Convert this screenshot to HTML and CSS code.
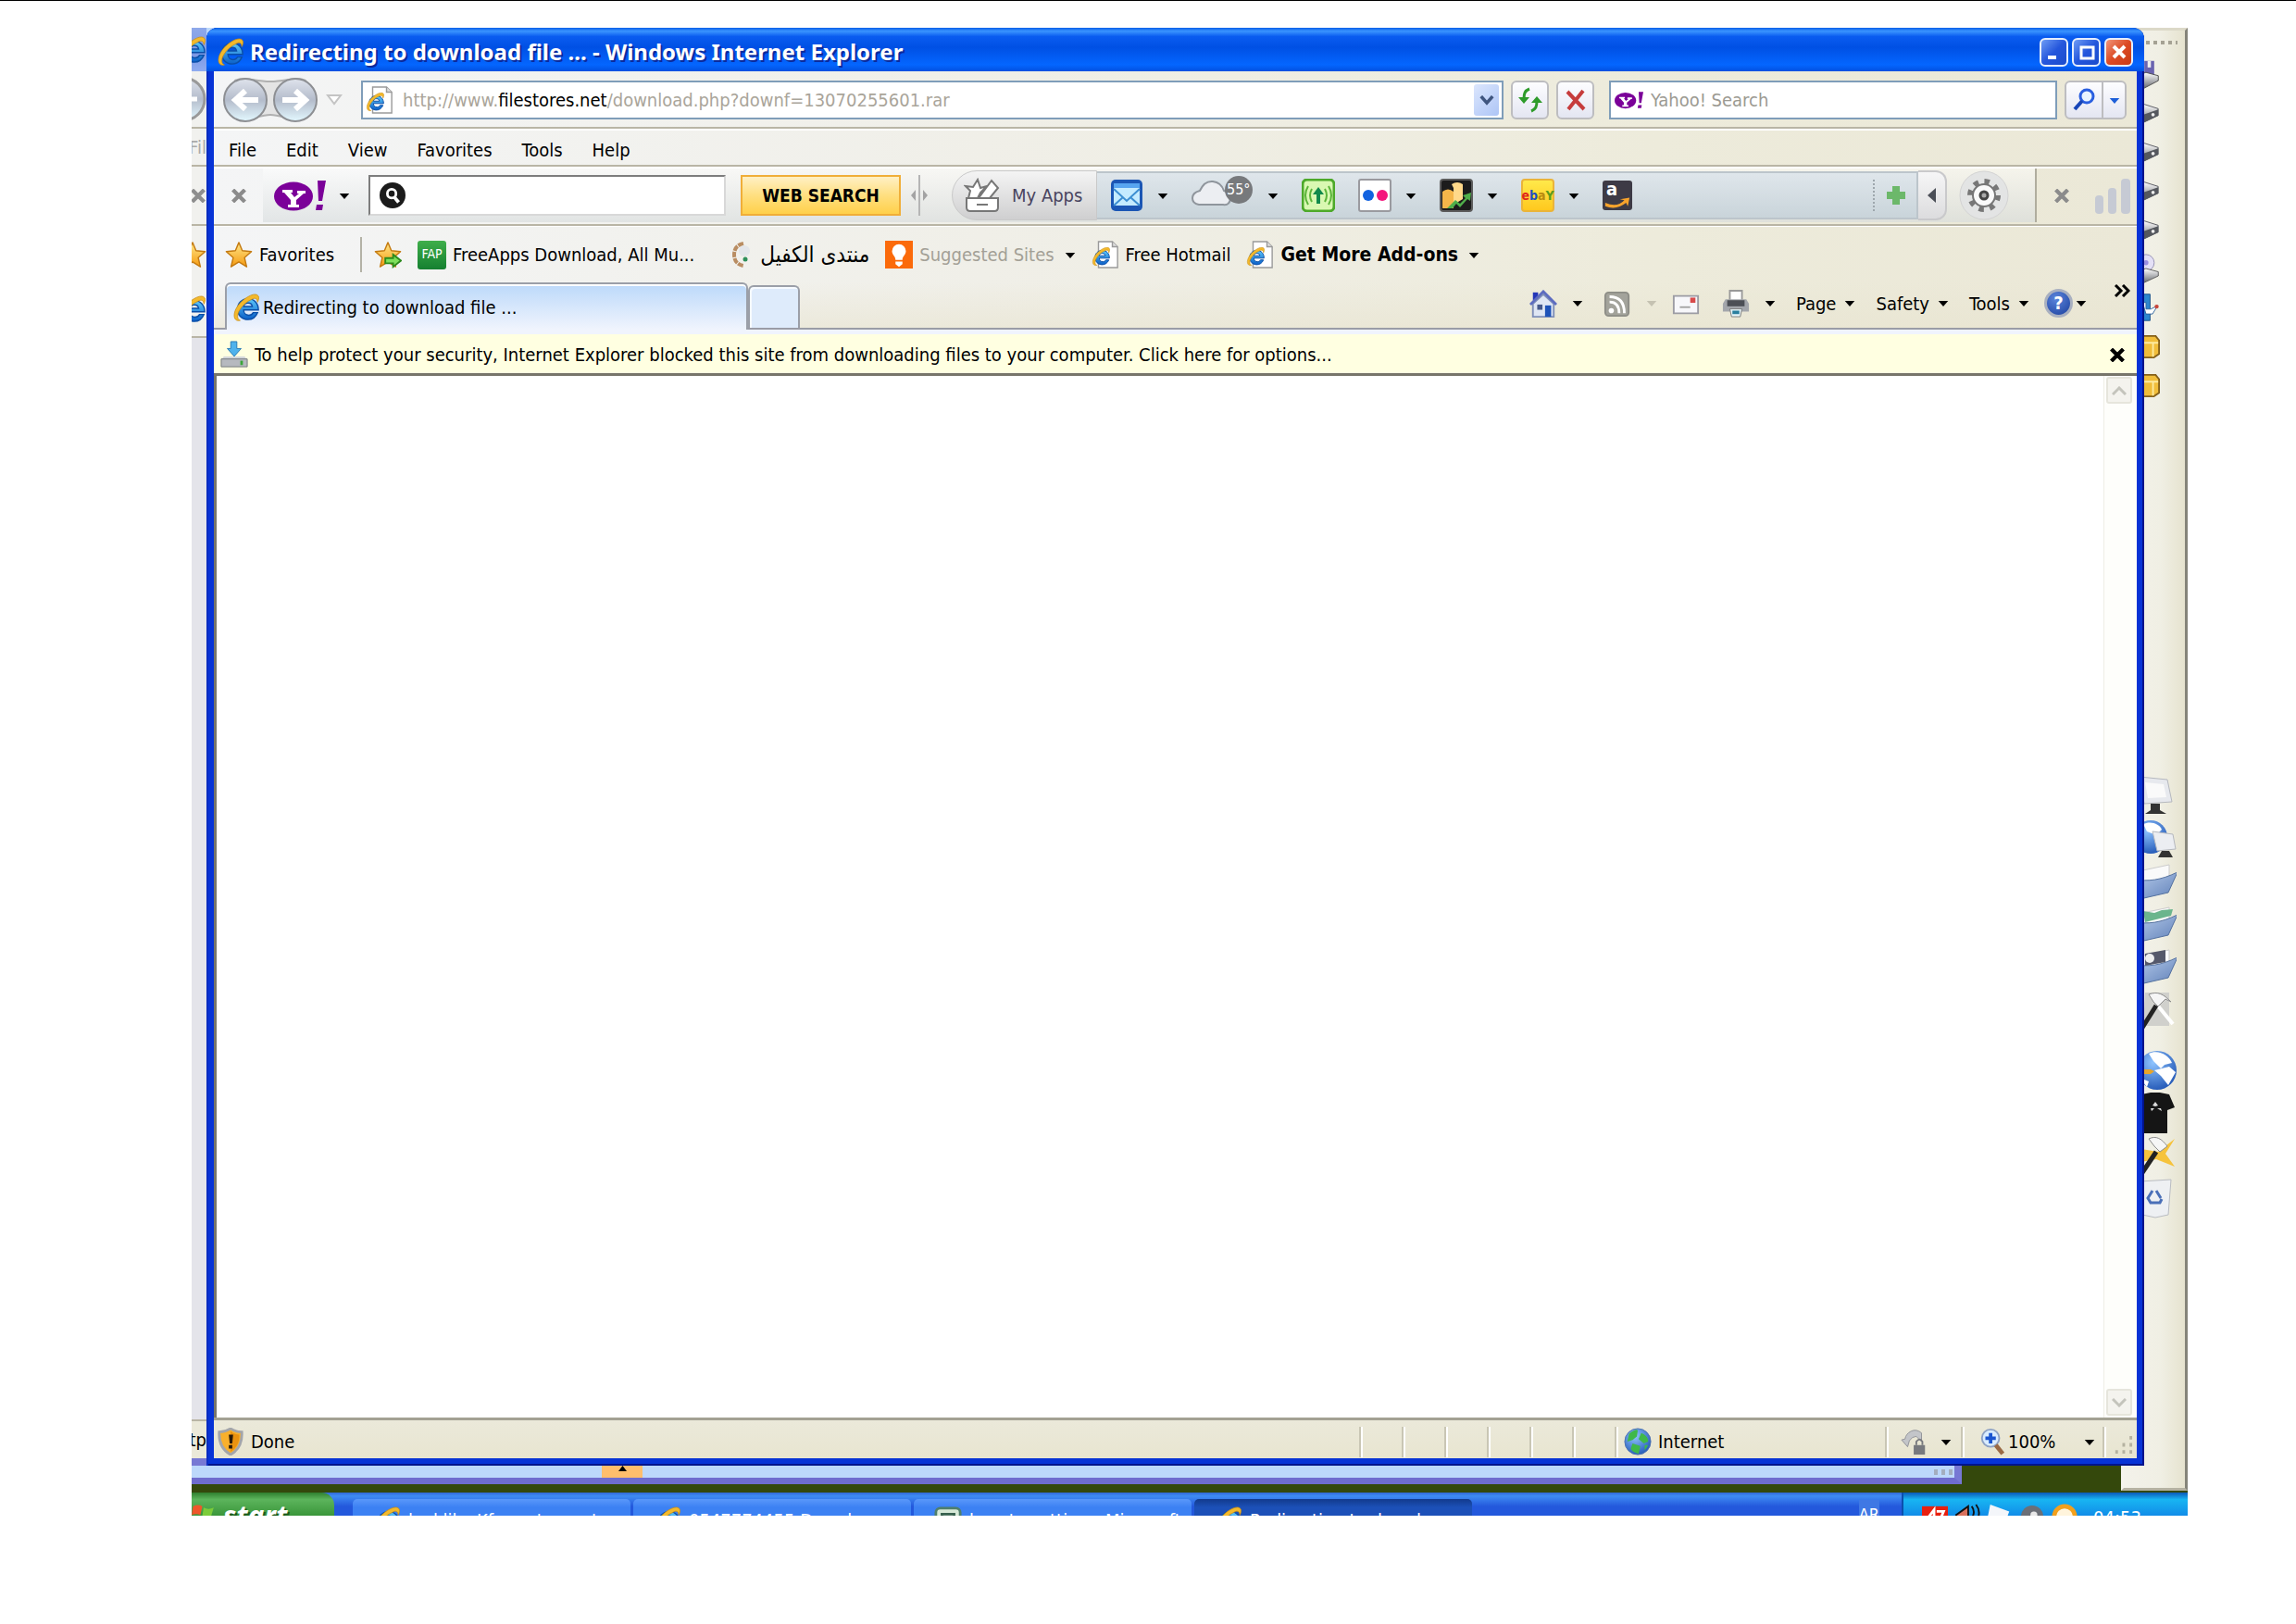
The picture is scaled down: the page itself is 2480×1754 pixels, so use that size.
FILE: index.html
```
<!DOCTYPE html>
<html lang="en">
	<head>
		<meta charset="utf-8">
		<title>Redirecting to download file ...</title>
		<link rel="stylesheet" href="styles.css">
	</head>
	<body>
		<!-- shared icons -->
		<svg class="defs" aria-hidden="true">
			<defs>
				<linearGradient id="gBlue" x1="0" y1="0" x2="0" y2="1"><stop offset="0" stop-color="#5cc8fa"/><stop offset="1" stop-color="#0a5fc8"/></linearGradient>
				<linearGradient id="gGold" x1="0" y1="0" x2="0" y2="1"><stop offset="0" stop-color="#ffe88a"/><stop offset="1" stop-color="#f59a10"/></linearGradient>
				<linearGradient id="gNav" x1="0" y1="0" x2="0" y2="1"><stop offset="0" stop-color="#dfe3ec"/><stop offset=".5" stop-color="#b4bccb"/><stop offset="1" stop-color="#e3f8ff"/></linearGradient>
				<linearGradient id="gGray" x1="0" y1="0" x2="0" y2="1"><stop offset="0" stop-color="#fff"/><stop offset="1" stop-color="#6b6e74"/></linearGradient>
				<linearGradient id="gFolder" x1="0" y1="0" x2="1" y2="1"><stop offset="0" stop-color="#b9cdec"/><stop offset="1" stop-color="#5f80b8"/></linearGradient>
				<radialGradient id="gGlobe" cx=".4" cy=".3" r=".8"><stop offset="0" stop-color="#8fc4ff"/><stop offset="1" stop-color="#1a4fb0"/></radialGradient>
			</defs>
			<symbol id="ie" viewBox="0 0 32 32">
				<path d="M30 19H13c0 4 3 6 6 6 2 0 4-1 5-3h5c-2 5-6 8-11 8C11 30 6 25 6 18S11 6 18 6s12 5 12 13zM13 15h10c-.5-3-2-4-5-4s-4.500 1-5 4z" fill="url(#gBlue)" stroke="#0b4fa8" stroke-width="1.500" fill-rule="evenodd"/>
				<path d="M9 31C0 33 0 21 8 12S27-2 30 3c1 2 0 5-1 7 0-4-3-6-7-3C14 10 6 20 6 26c0 3 1 4 3 5z" fill="#f3b92c" stroke="#c98d14" stroke-width=".8"/>
			</symbol>
			<symbol id="iepage" viewBox="0 0 32 32">
				<path d="M8 1h16l6 6v24H8z" fill="#fff" stroke="#9a9a9a" stroke-width="1.500"/>
				<path d="M24 1v6h6" fill="#ddd" stroke="#9a9a9a" stroke-width="1.500"/>
				<svg x="0" y="7" width="22" height="22" viewBox="0 0 32 32"><use href="#ie"/></svg>
			</symbol>
			<symbol id="star" viewBox="0 0 32 32">
				<path d="M16 2l4 9.500 10.500 1-8 7L25 30l-9-5.500L7 30l2.500-10.500-8-7 10.500-1z" fill="url(#gGold)" stroke="#c47a10" stroke-width="1.500" stroke-linejoin="round"/>
			</symbol>
			<symbol id="caret" viewBox="0 0 12 8"><path d="M0 1h12L6 8z"/></symbol>
			<symbol id="x" viewBox="0 0 16 14"><path d="M2 1l12 12M14 1L2 13" fill="none" stroke="currentColor" stroke-width="4"/></symbol>
			<symbol id="yahoo" viewBox="0 0 56 34">
				<ellipse cx="21" cy="18" rx="21" ry="15.500" fill="#7b0099"/>
				<path d="M9 11h11v3h-2l4 5 5-4h-2v-3h9v3h-2l-8 7v5h3v3H15v-3h3v-5l-7-8H9z" fill="#fff"/>
				<path d="M47 1h9l-4 22h-4zM46 27h7l-1 6h-7z" fill="#7b0099"/>
			</symbol>
			<symbol id="drive" viewBox="0 0 42 30">
				<path d="M2 14l22-9 16 5v8l-17 8L2 22z" fill="url(#gGray)" stroke="#55585e"/>
				<path d="M23 17l17-6v7l-17 8z" fill="#55585e"/><circle cx="34" cy="17" r="2" fill="#eee"/>
			</symbol>
			<symbol id="folder" viewBox="0 0 48 44">
				<path d="M2 12l38-8v24H4z" fill="#fafafa" stroke="#ccc"/>
				<path d="M2 20c16 2 28 1 47-8l-10 22L4 42z" fill="url(#gFolder)" stroke="#54719f"/>
			</symbol>
			<symbol id="globe" viewBox="0 0 32 32">
				<circle cx="16" cy="16" r="15" fill="url(#gGlobe)" stroke="#4a6fae"/>
			</symbol>
			<symbol id="hammer" viewBox="0 0 48 44">
				<path d="M14 4h26v36H12z" fill="#d0d0cc"/>
				<path d="M26 16l18 22" stroke="#fff" stroke-width="4"/><path d="M26 18l-15 24" stroke="#222" stroke-width="5"/>
				<path d="M18 6c10-4 16 0 24 8l-6-3-8 8-5-5z" fill="#f6f6f6" stroke="#8d8d8d"/>
			</symbol>
		</svg>

		<div class="desktop">
			<div class="workspace">
				<aside class="dock">
					<div class="grip"></div>
					<ul class="drives">
						<li><svg viewBox="0 0 42 36"><path d="M24 2h12v18H24z" fill="#6a63b0"/><path d="M28 2h4v8h-4z" fill="#eee"/><path d="M2 24l24-8 15 4v6l-17 9L2 32z" fill="url(#gGray)" stroke="#444"/></svg></li>
						<li><svg><use href="#drive"/></svg></li>
						<li><svg><use href="#drive"/></svg></li>
						<li><svg><use href="#drive"/></svg></li>
						<li><svg><use href="#drive"/></svg></li>
						<li><svg viewBox="0 0 42 36"><circle cx="26" cy="11" r="10" fill="#e4e0f6" stroke="#8f8bb0"/><circle cx="26" cy="11" r="3" fill="#9a8ee0"/><path d="M2 26l24-8 15 4v5l-17 8L2 32z" fill="url(#gGray)" stroke="#555"/></svg></li>
						<li><svg viewBox="0 0 42 36"><path d="M14 2h17v32H14z" fill="#2d86cf" stroke="#124a86"/><path d="M22 12h4v8h6l8-4-6 10h-8z" fill="#fff" stroke="#2a5f9a"/><circle cx="39" cy="17" r="2.500" fill="#c8443a"/></svg></li>
						<li><svg viewBox="0 0 42 30"><path d="M3 6l20-3h14l4 5v16l-6 4H3z" fill="#f0bd3a" stroke="#84601a" stroke-width="2"/><path d="M8 11h32M34 11v16" stroke="#fdeaa0" stroke-width="2"/></svg></li>
						<li><svg viewBox="0 0 42 30"><path d="M3 6l20-3h14l4 5v16l-6 4H3z" fill="#f0bd3a" stroke="#84601a" stroke-width="2"/><path d="M8 11h32M34 11v16" stroke="#fdeaa0" stroke-width="2"/></svg></li>
					</ul>
					<ul class="places">
						<li><svg viewBox="0 0 48 44"><path d="M8 1l30 3 5 24-30 2z" fill="#e7e9ee" stroke="#b5b8be"/><path d="M14 7l20 2 3 14-20 1z" fill="#fafafa"/><path d="M20 30h10v7l7 4H14l6-4z" fill="#333"/></svg></li>
						<li><svg viewBox="0 0 48 44"><circle cx="20" cy="20" r="18" fill="url(#gGlobe)"/><path d="M12 6c8-4 18 0 20 6l-6 6-10-4z" fill="#fff"/><path d="M22 14l22 3 3 16-20 2z" fill="#eceef2" stroke="#b5b8be"/><path d="M32 35h8l4 7H28z" fill="#333"/></svg></li>
						<li><svg><use href="#folder"/></svg></li>
						<li><svg viewBox="0 0 48 44"><use href="#folder"/><path d="M12 8l12 2 8-3 12-1-2 7-28 7z" fill="#6bb58d"/></svg></li>
						<li><svg viewBox="0 0 48 44"><use href="#folder"/><path d="M14 8l22-4v13l-22 4z" fill="#55586a"/><circle cx="19" cy="13" r="5" fill="#eee"/></svg></li>
						<li><svg><use href="#hammer"/></svg></li>
					</ul>
					<ul class="places more">
						<li><svg viewBox="0 0 48 44"><circle cx="27" cy="22" r="21" fill="url(#gGlobe)"/><path d="M18 4c10-5 22 2 25 10l-8 2-4 4-8-8zM24 22l16-4 7 6-8 14-8-10zM8 30l10 4-2 6z" fill="#fff"/><path d="M8 21h12l4 2-4 3H8z" fill="#e8a52a"/></svg></li>
						<li><svg viewBox="0 0 48 44"><path d="M10 2l10-2h10l10 2 6 14-8 3v25H12V19l-8-3z" fill="#151515"/><path d="M25 10l3 4-3 1-3-1zM20 17h4l-3 3zM27 17h4l1 3z" fill="#ddd"/></svg></li>
						<li><svg viewBox="0 0 48 44"><path d="M4 14l24 4 18-14-10 16 10 14-20-8-22 4z" fill="#f6c33c"/><path d="M26 18L10 42" stroke="#222" stroke-width="5"/><path d="M18 4c8-4 14 0 20 8l-8 6-6-6z" fill="#f6f6f6" stroke="#8d8d8d"/></svg></li>
						<li><svg viewBox="0 0 48 44"><path d="M8 4l34-2-3 38-14 3-14-3z" fill="#eef0f3" stroke="#b9bcc2"/><path d="M26 14l5 8M22 14l-5 8 3 5h10l2-4" fill="none" stroke="#4a6fb8" stroke-width="3"/></svg></li>
					</ul>
				</aside>

				<div class="back-window">
					<div class="edge">
						<div class="edge-title"><svg class="ico"><use href="#ie"/></svg></div>
						<div class="edge-nav"><svg class="ico-lg" viewBox="0 0 50 50"><circle cx="25" cy="25" r="23" fill="url(#gNav)" stroke="#999" stroke-width="3"/><path d="M40 25H22m9-9l-9 9 9 9" fill="none" stroke="#fff" stroke-width="5"/></svg></div>
						<div class="edge-menu">Fil</div>
						<div class="edge-tools"><svg class="close-x"><use href="#x"/></svg></div>
						<div class="edge-favs"><svg class="ico"><use href="#star"/></svg></div>
						<div class="edge-tabs"><svg class="ico"><use href="#ie"/></svg></div>
						<div class="edge-page"></div>
						<div class="edge-status">http</div>
						<div class="edge-bottom"></div>
					</div>
					<div class="back-foot"><button class="foot-up" aria-label="Expand"><svg viewBox="0 0 12 8"><path d="M6 0l6 8H0z"/></svg></button><span class="foot-grip"></span></div>
				</div>

				<main class="window">
					<header class="titlebar">
						<svg class="ico"><use href="#ie"/></svg>
						<h1>Redirecting to download file ... - Windows Internet Explorer</h1>
						<button class="win-btn" aria-label="Minimize"><svg viewBox="0 0 20 20"><path d="M3 14h9v4H3z" fill="#fff"/></svg></button>
						<button class="win-btn" aria-label="Maximize"><svg viewBox="0 0 20 20"><path d="M4 5h13v12H4z" fill="none" stroke="#fff" stroke-width="3"/></svg></button>
						<button class="win-btn red" aria-label="Close"><svg viewBox="0 0 20 20"><path d="M4 4l12 12M16 4L4 16" stroke="#fff" stroke-width="4"/></svg></button>
					</header>
					<div class="frame">
						<div class="chrome">
							<div class="nav-row">
								<button class="travel" aria-label="Back and forward">
									<svg viewBox="0 0 104 52">
										<path d="M14 5c10-5 20 1 38 1s28-6 38-1l10 20-10 20c-14 6-24-3-38-3s-24 9-38 3L4 25z" fill="#e4e4e4" stroke="#b0b0b0" stroke-width="2"/>
										<circle cx="25" cy="26" r="23" fill="url(#gNav)" stroke="#8d8f93" stroke-width="2"/>
										<circle cx="79" cy="26" r="23" fill="url(#gNav)" stroke="#8d8f93" stroke-width="2"/>
										<path d="M39 26H14m11-10L14 26l11 10" fill="none" stroke="#fff" stroke-width="6"/>
										<path d="M65 26h25M79 16l11 10-11 10" fill="none" stroke="#fff" stroke-width="6"/>
									</svg>
								</button>
								<button class="recent" aria-label="Recent pages"><svg viewBox="0 0 18 12"><path d="M2 1h14l-7 9z" fill="#fff" stroke="#c4c4c4" stroke-width="2"/></svg></button>
								<div class="address">
									<svg class="ico"><use href="#iepage"/></svg>
									<div class="url" contenteditable="true" role="textbox" aria-label="Address">http://www.<b>filestores.net</b>/download.php?downf=13070255601.rar</div>
									<button class="drop" aria-label="Show addresses"><svg viewBox="0 0 18 12"><path d="M2 1l7 8 7-8" fill="none" stroke="#3f557f" stroke-width="4"/></svg></button>
								</div>
								<button class="sq-btn" aria-label="Refresh"><svg viewBox="0 0 28 28"><path d="M1 11h12l-6 7zM15 17h12l-6-7z" fill="#2e9b2a"/><path d="M13 2C8 4 7 7 7 13M15 26c5-2 6-5 6-11" fill="none" stroke="#2e9b2a" stroke-width="3"/></svg></button>
								<button class="sq-btn" aria-label="Stop"><svg viewBox="0 0 28 28"><path d="M5 5l18 19M22 4L6 24" stroke="#c63c3c" stroke-width="4"/></svg></button>
								<label class="search-box"><svg><use href="#yahoo"/></svg><input type="text" placeholder="Yahoo! Search" aria-label="Yahoo! Search"></label>
								<div class="search-btns">
									<button aria-label="Search"><svg class="mag" viewBox="0 0 28 28"><circle cx="17" cy="10" r="7" fill="#e9f4ff" stroke="#2a5fe0" stroke-width="3"/><path d="M12 15L4 24" stroke="#1846b8" stroke-width="4"/></svg></button>
									<button class="more-search" aria-label="Search options"><svg class="caret blue"><use href="#caret"/></svg></button>
								</div>
							</div>

							<nav class="menu-row">
								<button>File</button><button>Edit</button><button>View</button><button>Favorites</button><button>Tools</button><button>Help</button>
							</nav>

							<div class="yahoo-row">
								<button class="bar-close" aria-label="Close toolbar"><svg class="close-x"><use href="#x"/></svg></button>
								<div class="yahoo-main">
									<button class="logo-btn" aria-label="Yahoo!"><svg class="logo"><use href="#yahoo"/></svg><svg class="caret"><use href="#caret"/></svg></button>
									<label class="web-box"><svg viewBox="0 0 30 30"><circle cx="15" cy="15" r="15" fill="#1b1b1b"/><circle cx="14" cy="13" r="5" fill="none" stroke="#fff" stroke-width="3"/><path d="M17 17l5 6" stroke="#fff" stroke-width="4"/></svg><input type="text" aria-label="Web search"></label>
									<button class="web-btn">WEB SEARCH</button>
									<svg class="splitter" viewBox="0 0 18 44"><path d="M9 0v44" stroke="#b5b5b5" stroke-width="2"/><path d="M5 16v12l-5-6zM13 16v12l5-6z" fill="#a3a3a3"/></svg>
									<button class="my-apps"><svg viewBox="0 0 40 38"><path d="M3 22h34v10q0 4-4 4H7q-4 0-4-4z" fill="#fff" stroke="#777" stroke-width="2"/><path d="M5 22l2-8-5-5 8 1 5-8 3 9 7-2-7 7-3 6zM16 22L30 3l7 8-9 11z" fill="#fff" stroke="#777" stroke-width="2"/><path d="M14 29h12" stroke="#777" stroke-width="2"/></svg>My Apps</button>
									<div class="apps">
										<button aria-label="Mail"><svg class="app" viewBox="0 0 36 36"><rect x="1" y="1" width="34" height="34" rx="5" fill="#1b56b4"/><path d="M4 5h28v5H4z" fill="#57a5f0"/><path d="M4 10h28v19H4z" fill="#c4ebff"/><path d="M4 11l14 13 14-13M4 29l10-9M32 29l-10-9" fill="none" stroke="#3c8ed2" stroke-width="2"/></svg><svg class="caret"><use href="#caret"/></svg></button>
										<button class="weather" aria-label="Weather"><svg class="cloud" viewBox="0 0 68 36"><path d="M8 31q-7-1-7-7t8-8Q14 5 23 6t12 10q8 2 7 9t-8 6z" fill="#eceef2" stroke="#8f959c" stroke-width="2"/><circle cx="51" cy="15" r="15" fill="#77797c"/></svg><span>55°</span><svg class="caret"><use href="#caret"/></svg></button>
										<button aria-label="Alerts"><svg class="app" viewBox="0 0 36 36"><rect x="1" y="1" width="34" height="34" rx="5" fill="#d9f8b2" stroke="#4da92a" stroke-width="3"/><path d="M18 9l6 8h-4v10h-4V17h-4z" fill="#118a4c"/><path d="M11 11q-4 7 0 14M7 8q-6 10 0 20M25 11q4 7 0 14M29 8q6 10 0 20" fill="none" stroke="#5cb43a" stroke-width="2"/></svg></button>
										<button aria-label="Flickr"><svg class="app" viewBox="0 0 36 36"><rect x="1" y="1" width="34" height="34" rx="2" fill="#fff" stroke="#9a9a9f" stroke-width="2"/><circle cx="11" cy="18" r="6" fill="#1262e0"/><circle cx="26" cy="18" r="6" fill="#f4167c"/></svg><svg class="caret"><use href="#caret"/></svg></button>
										<button aria-label="Finance"><svg class="app" viewBox="0 0 36 36"><rect x="1" y="1" width="34" height="34" rx="3" fill="#1c1c1c" stroke="#5c5c5c" stroke-width="2"/><path d="M3 14q6-5 12 0v18H3z" fill="#f5b64a"/><path d="M13 6q6-4 12 0v16l-10 6V10z" fill="#ffd98a"/><path d="M8 32l9-9 5 4 6-6-3-3 9-3-1 9-3-2-8 9-4-4-4 5z" fill="#4fae4a"/></svg><svg class="caret"><use href="#caret"/></svg></button>
										<button class="ebay" aria-label="eBay"><span class="ebay-tile"><i class="r">e</i><i class="b">b</i><i class="y">a</i><i class="g">Y</i></span><svg class="caret"><use href="#caret"/></svg></button>
										<button class="amazon" aria-label="Amazon"><span>a</span><svg viewBox="0 0 32 12"><path d="M2 6q14 6 22-3l-5-1 11-2-2 10-2-4Q15 15 2 10z" fill="#f7a32c"/></svg></button>
										<button class="add-app" aria-label="Add app"><svg viewBox="0 0 20 20"><path d="M6 0h8v6h6v8h-6v6H6v-6H0V6h6z" fill="#6cb86a"/></svg></button>
									</div>
									<button class="collapse" aria-label="Collapse"><svg viewBox="0 0 9 16"><path d="M9 0v16L0 8z" fill="#4b4f57"/></svg></button>
									<button class="gear" aria-label="Settings"><svg viewBox="0 0 54 54"><circle cx="27" cy="27" r="26" fill="#e3e4e4" stroke="#d3d3d3"/><circle cx="27" cy="27" r="15" fill="none" stroke="#777" stroke-width="6" stroke-dasharray="5.400 6.380"/><circle cx="27" cy="27" r="12" fill="#fafafa" stroke="#777" stroke-width="2"/><circle cx="27" cy="27" r="4" fill="#aaa" stroke="#444" stroke-width="3"/></svg></button>
								</div>
								<div class="side-bar">
									<button class="bar-close" aria-label="Close toolbar"><svg class="close-x"><use href="#x"/></svg></button>
									<svg class="signal" viewBox="0 0 40 40"><rect x="1" y="20" width="9" height="20" rx="4" fill="#c6cad4"/><rect x="15" y="12" width="9" height="28" rx="4" fill="#c6cad4"/><rect x="29" y="2" width="10" height="38" rx="4" fill="#c6cad4"/></svg>
								</div>
							</div>

							<div class="favs-row">
								<button class="fav-main"><svg class="ico"><use href="#star"/></svg>Favorites</button>
								<button aria-label="Add to Favorites bar"><svg class="ico" viewBox="0 0 32 32"><use href="#star"/><path d="M13 20h9v-4l9 7-9 7v-4h-9z" fill="#7ee05c" stroke="#2c8a1c" stroke-width="2"/></svg></button>
								<a href="#"><span class="fap">FAP</span>FreeApps Download, All Mu...</a>
								<a href="#" class="forum"><svg viewBox="0 0 22 30"><path d="M14 3q-10 2-10 12t10 12" fill="none" stroke="#b98d62" stroke-width="4" stroke-dasharray="6 1"/><circle cx="15" cy="11" r="6" fill="#e3e6ea"/><circle cx="16" cy="20" r="2.500" fill="#2e8f5a"/></svg><bdi lang="ar">منتدى الكفيل</bdi></a>
								<a href="#" class="suggested"><svg class="ico" viewBox="0 0 32 32"><path d="M0 0h32v32H0z" fill="#fb6a0a"/><path d="M16 4a8 8 0 0 1 8 8c0 4-4 6-4 10h-8c0-4-4-6-4-10a8 8 0 0 1 8-8zM12 24h8v3l-4 3-4-3z" fill="#fff"/></svg>Suggested Sites<svg class="caret"><use href="#caret"/></svg></a>
								<a href="#"><svg class="ico"><use href="#iepage"/></svg>Free Hotmail</a>
								<a href="#" class="addons"><svg class="ico"><use href="#iepage"/></svg>Get More Add-ons<svg class="caret"><use href="#caret"/></svg></a>
							</div>

							<div class="tab-row">
								<button class="tab active"><svg class="ico"><use href="#ie"/></svg>Redirecting to download file ...</button>
								<button class="tab new" aria-label="New tab"></button>
								<div class="commands">
									<button aria-label="Home"><svg class="ico" viewBox="0 0 32 32"><path d="M4 3h6v9H4z" fill="#2436b8"/><path d="M4 16L16 5l12 11v15H4z" fill="#dfe6f4" stroke="#7f8fb8" stroke-width="2"/><path d="M1 17L16 2l15 15" fill="none" stroke="#5d6cc0" stroke-width="3"/><path d="M18 18h7v13h-7z" fill="#1d52b8"/><path d="M9 17h6v6H9z" fill="#46598c"/></svg><svg class="caret"><use href="#caret"/></svg></button>
									<button class="off" aria-label="Feeds"><svg class="ico" viewBox="0 0 32 32"><rect x="2" y="3" width="27" height="27" rx="4" fill="#a3a39b" stroke="#8d8d86" stroke-width="2"/><circle cx="9" cy="24" r="3" fill="#fff"/><path d="M7 14q11 0 11 13M7 8q17 0 17 19" fill="none" stroke="#fff" stroke-width="3"/></svg><svg class="caret"><use href="#caret"/></svg></button>
									<button class="mail" aria-label="Read mail"><svg class="ico" viewBox="0 0 32 32"><path d="M2 7h28v20H2z" fill="#f7f7fa" stroke="#9c9ca4" stroke-width="2"/><path d="M21 9h6v6h-6z" fill="#d84a4a"/><path d="M9 20h12" stroke="#a4a4a4" stroke-width="2"/></svg></button>
									<button aria-label="Print"><svg class="ico" viewBox="0 0 32 32"><path d="M9 1h14v12H9z" fill="#fff" stroke="#999" stroke-width="2"/><path d="M4 11h24l3 5v9H1v-9z" fill="#a3a6ab"/><path d="M6 12h20v7H6z" fill="#4c4f55"/><path d="M9 22h14l-2 9H11z" fill="#e8f6fa" stroke="#777"/><path d="M12 24h8v4h-8z" fill="#2a7f9e"/></svg><svg class="caret"><use href="#caret"/></svg></button>
									<button class="txt">Page<svg class="caret"><use href="#caret"/></svg></button>
									<button class="txt">Safety<svg class="caret"><use href="#caret"/></svg></button>
									<button class="txt">Tools<svg class="caret"><use href="#caret"/></svg></button>
									<button class="help" aria-label="Help"><span>?</span><svg class="caret"><use href="#caret"/></svg></button>
								</div>
								<button class="chevron" aria-label="More commands"><svg viewBox="0 0 18 14"><path d="M2 1l6 6-6 6M10 1l6 6-6 6" fill="none" stroke="#000" stroke-width="3"/></svg></button>
							</div>
							<div class="tab-base"></div>
						</div>

						<div class="infobar">
							<svg class="ico" viewBox="0 0 32 32"><path d="M12 1h7v8h5l-8 9-8-9h4z" fill="#4fb2ec" stroke="#2478b4"/><path d="M4 18h24l3 4H1z" fill="#d4d6da"/><path d="M1 21h30v9H1z" fill="#b6b9bf" stroke="#74777d"/><path d="M23 23h3v5h-3z" fill="#3aa53a"/></svg>
							<p>To help protect your security, Internet Explorer blocked this site from downloading files to your computer. Click here for options...</p>
							<button aria-label="Close information bar"><svg class="close-x"><use href="#x"/></svg></button>
						</div>

						<section class="page">
							<div class="scroll">
								<button aria-label="Scroll up"><svg viewBox="0 0 16 10"><path d="M1 9l7-7 7 7" fill="none" stroke="#c4c4bc" stroke-width="3"/></svg></button>
								<button aria-label="Scroll down"><svg viewBox="0 0 16 10"><path d="M1 1l7 7 7-7" fill="none" stroke="#c4c4bc" stroke-width="3"/></svg></button>
							</div>
						</section>

						<footer class="status">
							<svg class="ico" viewBox="0 0 32 32"><path d="M16 1q6 4 13 4 1 18-13 26Q2 23 3 5q7 0 13-4z" fill="#f9b02c" stroke="#a3a5aa" stroke-width="3"/><path d="M16 4v24q11-7 10-20-6 0-10-4z" fill="#ea920f"/><path d="M14 8h5l-1 10h-3zM14 20h4v4h-4z" fill="#2b1a08"/></svg>
							<span class="done">Done</span>
							<i class="cell"></i><i class="cell"></i><i class="cell"></i><i class="cell"></i><i class="cell"></i><i class="cell"></i>
							<span class="zone"><svg class="ico" viewBox="0 0 32 32"><use href="#globe"/><path d="M6 7q8-6 10-4l-1 7-5 4-6 2zM20 6q8 3 8 10l-5 2-6-5zM10 18l9 3-2 9q-8-2-9-6zM24 20l4 0-4 6z" fill="#3fb84a"/></svg>Internet</span>
							<button class="lock" aria-label="Protected mode"><svg class="ico" viewBox="0 0 32 32"><path d="M1 14l7 8 2-7q3-5 8-5l6 6V6q-6-5-12-2T5 13z" fill="#c3c5c9" stroke="#8f9197"/><path d="M15 20h13v11H15z" fill="#77797e"/><path d="M18 20v-4q4-5 7 0v4" fill="none" stroke="#77797e" stroke-width="2"/></svg><svg class="caret"><use href="#caret"/></svg></button>
							<button class="zoom"><svg class="ico" viewBox="0 0 32 32"><circle cx="14" cy="12" r="10" fill="#d9ecff" stroke="#8ea2c4" stroke-width="2"/><path d="M14 6v12M8 12h12" stroke="#1b55d0" stroke-width="4"/><path d="M20 20l8 10" stroke="#9a6a45" stroke-width="5"/></svg><span>100%</span><svg class="caret"><use href="#caret"/></svg></button>
							<svg class="size-grip" viewBox="0 0 24 24"><path d="M20 2h3v4h-3zM20 10h3v4h-3zM12 10h3v4h-3zM20 18h3v4h-3zM12 18h3v4h-3zM4 18h3v4H4z" fill="#b5b2a0"/></svg>
						</footer>
					</div>
				</main>
			</div>

			<div class="taskbar">
				<button class="start"><svg viewBox="0 0 36 36"><path d="M2 4q8-4 14 0l-3 13q-6-3-13 0z" fill="#f0562a"/><path d="M18 6q7 4 15 0l-4 13q-7 3-13-1z" fill="#7ccc3a"/></svg>start</button>
				<button class="task"><svg class="ico"><use href="#ie"/></svg>looklike Kfaremt reamt</button>
				<button class="task"><svg class="ico"><use href="#ie"/></svg>0547774455 Downloa...</button>
				<button class="task"><svg class="ico" viewBox="0 0 32 32"><rect x="2" y="2" width="28" height="28" rx="5" fill="#d7e9d8" stroke="#4f7f6c" stroke-width="3"/><path d="M9 9h14v14H9z" fill="none" stroke="#38614f" stroke-width="3"/></svg>how to setting - Microsoft ...</button>
				<button class="task current"><svg class="ico"><use href="#ie"/></svg>Redirecting to downl...</button>
				<span class="lang">AR</span>
				<div class="tray">
					<svg viewBox="0 0 30 30"><path d="M0 2h30v28H0z" fill="#e8200f"/><path d="M8 14l6-8v14M17 8h8l-5 12" fill="none" stroke="#fff" stroke-width="3"/></svg>
					<svg viewBox="0 0 30 30"><path d="M2 12l14-10v20L4 20z" fill="#d8705c" stroke="#111" stroke-width="2"/><path d="M20 2q5 6 0 14M25 0q7 9 0 20" fill="none" stroke="#111" stroke-width="2"/></svg>
					<svg viewBox="0 0 30 30"><path d="M4 0l22 8-6 16-20-4z" fill="#f4f6fa"/></svg>
					<svg viewBox="0 0 30 30"><circle cx="15" cy="14" r="13" fill="#6b6f77"/><circle cx="17" cy="12" r="4" fill="#e8e8e8"/></svg>
					<svg viewBox="0 0 30 30"><circle cx="15" cy="14" r="12" fill="#fff4dc" stroke="#f3a01c" stroke-width="5"/></svg>
					<time>04:53</time>
				</div>
			</div>
		</div>
	</body>
</html>
```
FILE: styles.css
```
*{margin: 0;padding: 0;box-sizing: border-box;}
body{
	display: flex;
	flex-direction: column;
	min-height: 100vh;
	border-top: 1px solid #000;
	background: #fff;
	font: 20px/24px "DejaVu Sans Condensed","DejaVu Sans","Noto Sans",sans-serif;
	color: #000;
}
button,input{
	font: inherit;
	color: inherit;
	border: 0;
	background: none;
	outline: 0;
}
button{
	display: flex;
	align-items: center;
	white-space: nowrap;
}
a{color: inherit;text-decoration: none;}
ul{list-style: none;}
svg{display: block;flex: none;}
.defs{position: absolute;width: 0;height: 0;}
.ico{width: 30px;height: 30px;}
.caret{width: 12px;height: 7px;fill: #000;}
.close-x{width: 18px;height: 15px;}

/* desktop */
.desktop{
	flex: 1;
	display: flex;
	flex-direction: column;
	margin: 29px 117px 117px 207px;
	overflow: hidden;
	background: #34480c;
}
.workspace{position: relative;flex: 1;}

/* dock on the right */
.dock{
	position: absolute;
	top: 0;right: 0;bottom: 2px;
	width: 72px;
	background: linear-gradient(to right,#f3f2ea,#f0efe4 60%,#e6e3cf);
	border: 3px solid #f4f3ec;
	border-top-color: #dcd9c8;
	border-right-color: #85847a;
	border-bottom-color: #b5b2a2;
}
.grip{
	height: 4px;
	margin: 11px 8px 0 24px;
	background: repeating-linear-gradient(to right,#a5a294 0 4px,transparent 4px 8px);
}
.drives{padding-top: 11px;}
.drives li{height: 42px;display: flex;align-items: center;}
.drives svg{width: 39px;height: 32px;}
.places{padding: 400px 0 0 9px;}
.places li{height: 46px;display: flex;align-items: center;}
.places svg{width: 48px;height: 44px;}
.places.more{padding-top: 20px;}

/* window behind */
.back-window{
	position: absolute;
	top: 0;left: 0;right: 244px;bottom: 9px;
	display: flex;
	flex-direction: column;
	border-right: 8px solid #7778d4;
	border-bottom: 7px solid #6f6cce;
	background: #bcd8fb;
}
.edge{
	flex: 1;
	display: flex;
	flex-direction: column;
	width: 16px;
	overflow: hidden;
	background: #f1f1ee;
}
.edge>div{
	display: flex;
	justify-content: flex-end;
	align-items: center;
	border-bottom: 2px solid #b9b5a5;
}
.edge .edge-title{height: 47px;border: 0;background: linear-gradient(#8fa9ea,#7c98e4 60%,#8eabf0);}
.edge-nav{height: 62px;}
.ico-lg{width: 50px;height: 50px;}
.edge .edge-menu{height: 41px;color: #aaa;}
.edge-tools{height: 64px;color: #8e8e8e;}
.edge .edge-favs{height: 61px;border: 0;}
.edge-tabs{height: 60px;}
.edge-page{flex: 1;background: #e4e4ea;}
.edge .edge-status{height: 40px;border: 0;background: #ebe9d9;}
.edge .edge-bottom{height: 8px;border: 0;background: #7778d4;}
.back-foot{
	display: flex;
	align-items: center;
	justify-content: space-between;
	height: 13px;
	padding: 0 2px 0 443px;
}
.foot-up{
	width: 44px;height: 13px;
	justify-content: center;
	align-items: flex-start;
	background: #ffbe6c;
}
.foot-up svg{width: 9px;height: 6px;}
.foot-grip{
	width: 20px;height: 6px;
	background: repeating-linear-gradient(to right,#a3aebf 0 4px,transparent 4px 8px);
}

/* main window */
.window{
	position: absolute;
	top: 0;left: 16px;right: 47px;bottom: 29px;
	display: flex;
	flex-direction: column;
	border-radius: 12px 12px 0 0;
	background: #0733d6;
	box-shadow: inset 2px 0 #0a2cc0,inset -2px -2px #00138c;
}
.titlebar{
	display: flex;
	align-items: center;
	gap: 4px;
	height: 47px;
	padding: 5px 12px 0 11px;
	border-radius: 12px 12px 0 0;
	background: linear-gradient(#0a5fe8,#3a94ff 8%,#0a5cf0 20%,#0050e4 45%,#0466ff 85%,#0250e0);
}
.titlebar h1{
	flex: 1;
	padding-left: 2px;
	font: bold 24px/30px "Noto Sans","Open Sans",sans-serif;
	color: #fff;
	text-shadow: 2px 2px #0a2a9c;
	white-space: nowrap;
}
.win-btn{
	width: 31px;height: 31px;
	justify-content: center;
	border: 2px solid #e6eefc;
	border-radius: 6px;
	background: linear-gradient(135deg,#6f9cf5,#2456dc 50%,#1b4ccc);
}
.win-btn svg{width: 20px;height: 20px;}
.win-btn.red{background: linear-gradient(135deg,#f0957a,#dc4a24 50%,#c83a14);}
.frame{
	flex: 1;
	display: flex;
	flex-direction: column;
	margin: 0 8px 8px;
	background: #fff;
}
.chrome{background: linear-gradient(to right,#f4f5f6,#f0efe8 40%,#edebdb 75%,#ebe8d7);}

/* address row */
.nav-row{
	display: flex;
	align-items: center;
	gap: 8px;
	height: 62px;
	padding: 2px 11px 0 9px;
	border-bottom: 2px solid #b9b5a5;
}
.travel svg{width: 104px;height: 52px;}
.recent svg{width: 18px;height: 12px;}
.address,.search-box{
	display: flex;
	align-items: center;
	height: 42px;
	border: 2px solid #7f9db9;
	background: #fff;
}
.address{
	flex: 1;
	gap: 10px;
	margin-left: 12px;
	padding: 0 3px;
	color: #aaa59a;
}
.url{flex: 1;white-space: nowrap;outline: 0;}
.url b{font-weight: normal;color: #000;}
.drop{
	width: 27px;height: 34px;
	justify-content: center;
	border-radius: 3px;
	background: linear-gradient(135deg,#dbe6fd,#aec5f6);
}
.drop svg{width: 16px;height: 11px;}
.sq-btn,.search-btns{
	height: 42px;
	border: 2px solid #bdbdc0;
	border-radius: 6px;
	background: linear-gradient(#fdfdff,#e4e6f2);
}
.sq-btn{width: 41px;justify-content: center;}
.sq-btn svg,.mag{width: 28px;height: 28px;}
.search-box{
	width: 484px;
	gap: 8px;
	margin-left: 8px;
	padding-left: 4px;
}
.search-box svg{width: 31px;height: 22px;}
.search-box input{flex: 1;}
.search-box input::placeholder{color: #9c9a92;opacity: 1;}
.search-btns{display: flex;}
.search-btns button{width: 38px;justify-content: center;}
.search-btns .more-search{width: 25px;border-left: 2px solid #bdbdc0;}
.caret.blue{fill: #1d5fd8;}

/* menu */
.menu-row{
	display: flex;
	align-items: center;
	gap: 32px;
	height: 41px;
	padding: 5px 16px 0;
	border-top: 2px solid #fff;
	border-bottom: 2px solid #b9b5a5;
}

/* yahoo toolbar */
.yahoo-row{
	display: flex;
	height: 64px;
	padding-bottom: 2px;
	border-bottom: 2px solid #b9b5a5;
	border-top: 2px solid #fff;
}
.bar-close{color: #8b8b8b;padding-left: 18px;}
.yahoo-main{
	flex: 1;
	display: flex;
	align-items: center;
	margin-left: 17px;
	padding: 0 28px 0 12px;
	background: linear-gradient(rgba(255,255,255,.5),rgba(214,219,220,.6));
}
.logo-btn{gap: 14px;}
.logo{width: 56px;height: 34px;}
.web-box{
	display: flex;
	align-items: center;
	width: 386px;height: 44px;
	margin: 0 16px 0 20px;
	padding-left: 10px;
	border: 2px solid #d8d8d8;
	border-top-color: #7d7d7d;
	border-left-color: #7d7d7d;
	background: #fff;
}
.web-box svg{width: 28px;height: 28px;}
.web-box input{flex: 1;padding-left: 8px;min-width: 0;}
.web-btn{
	width: 173px;height: 44px;
	justify-content: center;
	border: 2px solid #f0ae38;
	background: linear-gradient(#fff0c4,#ffdf80 50%,#ffd04a);
	font-size: 19px;
	font-weight: bold;
}
.splitter{width: 18px;height: 44px;margin: 0 26px 0 11px;}
.my-apps{
	gap: 12px;
	width: 157px;height: 54px;
	padding-left: 12px;
	border: 1px solid #c9c9c9;
	border-radius: 27px 0 0 27px;
	background: linear-gradient(#f4f4f4,#cfcfd0);
	color: #4a4560;
}
.my-apps svg{width: 40px;height: 38px;}
.apps{
	flex: 1;
	display: flex;
	align-items: center;
	gap: 25px;
	height: 52px;
	padding: 0 12px 0 14px;
	border: 2px solid #bcc5cb;
	border-left: 0;
	background: linear-gradient(#dfe6eb,#c9d4da);
}
.apps button{gap: 15px;}
.app{width: 36px;height: 36px;}
.apps .weather{position: relative;gap: 14px;}
.cloud{width: 68px;height: 36px;margin-bottom: 6px;}
.weather span{
	position: absolute;
	left: 38px;top: 3px;
	font-size: 16px;
	line-height: 24px;
	color: #fff;
}
.ebay-tile{
	display: flex;
	align-items: center;
	justify-content: center;
	width: 36px;height: 36px;
	border: 2px solid #eab43a;
	border-radius: 4px;
	background: linear-gradient(#ffe94a,#ffc81e);
	font-size: 14px;
	font-weight: bold;
}
.ebay-tile i{font-style: normal;}
.r{color: #e0261c;}
.b{color: #1d4fc0;}
.y{color: #b88a10;}
.g{color: #5c9c1c;}
.apps .amazon{
	flex-direction: column;
	gap: 0;
	width: 32px;height: 32px;
	border-radius: 3px;
	background: #3d3a45;
	color: #fff;
	font-weight: bold;
	line-height: 18px;
}
.amazon span{padding-right: 12px;}
.amazon svg{width: 30px;height: 12px;}
.add-app{
	height: 34px;
	margin-left: auto;
	padding-left: 13px;
	border-left: 2px dotted #9da6ac;
}
.add-app svg{width: 20px;height: 20px;}
.collapse{
	width: 31px;height: 54px;
	justify-content: center;
	margin-right: 13px;
	border: 2px solid #c9c9cb;
	border-left: 0;
	border-radius: 0 12px 12px 0;
	background: linear-gradient(#f6f6f7,#dcdcde);
}
.collapse svg{width: 9px;height: 16px;}
.gear svg{width: 54px;height: 54px;}
.side-bar{
	display: flex;
	align-items: center;
	gap: 26px;
	padding-right: 6px;
	border-left: 2px solid #b0ad9e;
}
.signal{width: 40px;height: 40px;}

/* favorites bar */
.favs-row{
	display: flex;
	align-items: center;
	gap: 17px;
	height: 61px;
	padding: 0 12px;
	border-top: 1px solid #fff;
}
.favs-row a,.fav-main{
	display: flex;
	align-items: center;
	gap: 7px;
	white-space: nowrap;
}
.fav-main{
	height: 38px;
	padding-right: 28px;
	border-right: 2px solid #b4b2a6;
}
.fav-main+button{margin-left: -4px;}
.fap{
	width: 31px;height: 31px;
	border-radius: 3px;
	background: linear-gradient(#3fae4a,#158030);
	color: #fff;
	font-size: 14px;
	line-height: 28px;
	text-align: center;
}
.favs-row .forum{gap: 10px;margin-left: 22px;}
.forum svg{width: 22px;height: 30px;}
.forum bdi{font-size: 24px;line-height: 30px;}
.suggested{color: #a3a096;}
.favs-row .addons{font-size: 21px;font-weight: bold;}
.favs-row .caret{margin-left: 4px;}

/* tabs and command bar */
.tab-row{
	display: flex;
	align-items: flex-end;
	height: 51px;
	padding: 0 7px 0 12px;
	border-bottom: 2px solid #9a9ca6;
	background: linear-gradient(rgba(236,233,216,0),rgba(232,228,208,.6));
}
.tab{
	height: 49px;
	border: 2px solid #9b9fa8;
	border-bottom: 0;
	border-radius: 6px 6px 0 0;
}
.tab.active{
	gap: 3px;
	width: 565px;height: 51px;
	margin-bottom: -2px;
	padding-left: 6px;
	background: linear-gradient(#bcd9fa,#f0f4fd);
	box-shadow: inset 0 2px #fff;
}
.tab.new{width: 56px;height: 46px;background: #deebfb;box-shadow: inset 2px 2px #f6faff;}
.commands{
	flex: 1;
	display: flex;
	align-items: center;
	align-self: center;
	justify-content: flex-end;
	gap: 22px;
	padding-bottom: 4px;
}
.commands button{gap: 16px;}
.commands .txt{gap: 9px;}
.commands .off .caret{fill: #c5c2b2;}
.commands .mail{margin: 0 2px 0 -6px;}
.commands .help{gap: 3px;margin-left: -6px;}
.help span{
	width: 31px;height: 31px;
	border: 3px solid #a9b0c0;
	border-radius: 50%;
	background: radial-gradient(circle at 40% 30%,#5c86dc,#1a3e9c);
	color: #fff;
	font-weight: bold;
	line-height: 25px;
}
.chevron{align-self: flex-start;padding: 2px 0 0 29px;}
.chevron svg{width: 18px;height: 14px;}
.tab-base{height: 5px;background: #f0f4fd;}

/* information bar */
.infobar{
	display: flex;
	align-items: center;
	gap: 7px;
	height: 42px;
	padding: 2px 12px 0 7px;
	background: #ffffe1;
}
.infobar p{flex: 1;white-space: nowrap;}

/* page area */
.page{
	flex: 1;
	display: flex;
	justify-content: flex-end;
	border: 2px solid #77756b;
	border-width: 3px 0 0 3px;
	background: #fff;
}
.scroll{
	display: flex;
	flex-direction: column;
	justify-content: space-between;
	width: 36px;
	padding: 1px 5px 2px 2px;
	border-left: 1px solid #efeee6;
	background: #fefefb;
}
.scroll button{
	width: 28px;height: 29px;
	justify-content: center;
	border: 2px solid #e6e5dc;
	border-radius: 3px;
	background: #f4f3ee;
}
.scroll svg{width: 16px;height: 10px;}

/* status bar */
.status{
	display: flex;
	align-items: center;
	height: 44px;
	padding: 5px 0 0 3px;
	border-top: 3px solid #a3a193;
	background: linear-gradient(#ebe9da,#e8e5d0);
}
.done{flex: 1;padding-left: 7px;}
.cell,.zone,.lock,.zoom,.size-grip{
	height: 33px;
	border-left: 2px solid #c9c6b4;
	box-shadow: inset 2px 0 #fff;
}
.cell{width: 46px;}
.zone{
	display: flex;
	align-items: center;
	gap: 7px;
	width: 292px;
	padding-left: 8px;
}
.lock{gap: 13px;width: 82px;padding-left: 15px;}
.zoom{gap: 2px;width: 153px;padding-left: 17px;}
.zoom .caret{margin-left: auto;margin-right: 8px;}
.size-grip{width: 37px;padding: 6px 4px 0 8px;}

/* taskbar */
.taskbar{
	display: flex;
	align-items: flex-start;
	height: 25px;
	overflow: hidden;
	background: linear-gradient(#3168d5,#3f8cf3 15%,#2358dc 60%);
	color: #fff;
}
.start{
	gap: 8px;
	width: 154px;height: 50px;
	border-radius: 0 14px 14px 0;
	background: linear-gradient(#2f7f2f,#5cb45c 15%,#3a963a 50%);
	font: italic bold 30px/36px "Noto Sans",sans-serif;
	text-shadow: 2px 2px #1c5a1c;
}
.start svg{width: 26px;height: 36px;}
.task{
	gap: 8px;
	width: 300px;height: 45px;
	margin: 7px 0 0 3px;
	padding-left: 22px;
	border-radius: 5px;
	background: linear-gradient(#5a98fa,#3c81f3 20%);
	overflow: hidden;
}
.start+.task{margin-left: 20px;}
.task.current{background: linear-gradient(#123a8c,#1c50b8 20%);}
.lang{
	margin: 8px 24px 0 auto;
	background: #3f78e4;
	line-height: 32px;
	font-size: 18px;
}
.tray{
	display: flex;
	gap: 7px;
	width: 309px;height: 50px;
	padding: 12px 0 0 20px;
	border-left: 2px solid #0a4fae;
	background: linear-gradient(#0c59b9,#18b5f2 15%,#118ce8 50%);
}
.tray svg{width: 28px;height: 30px;}
.tray time{padding-left: 10px;line-height: 30px;}
```
